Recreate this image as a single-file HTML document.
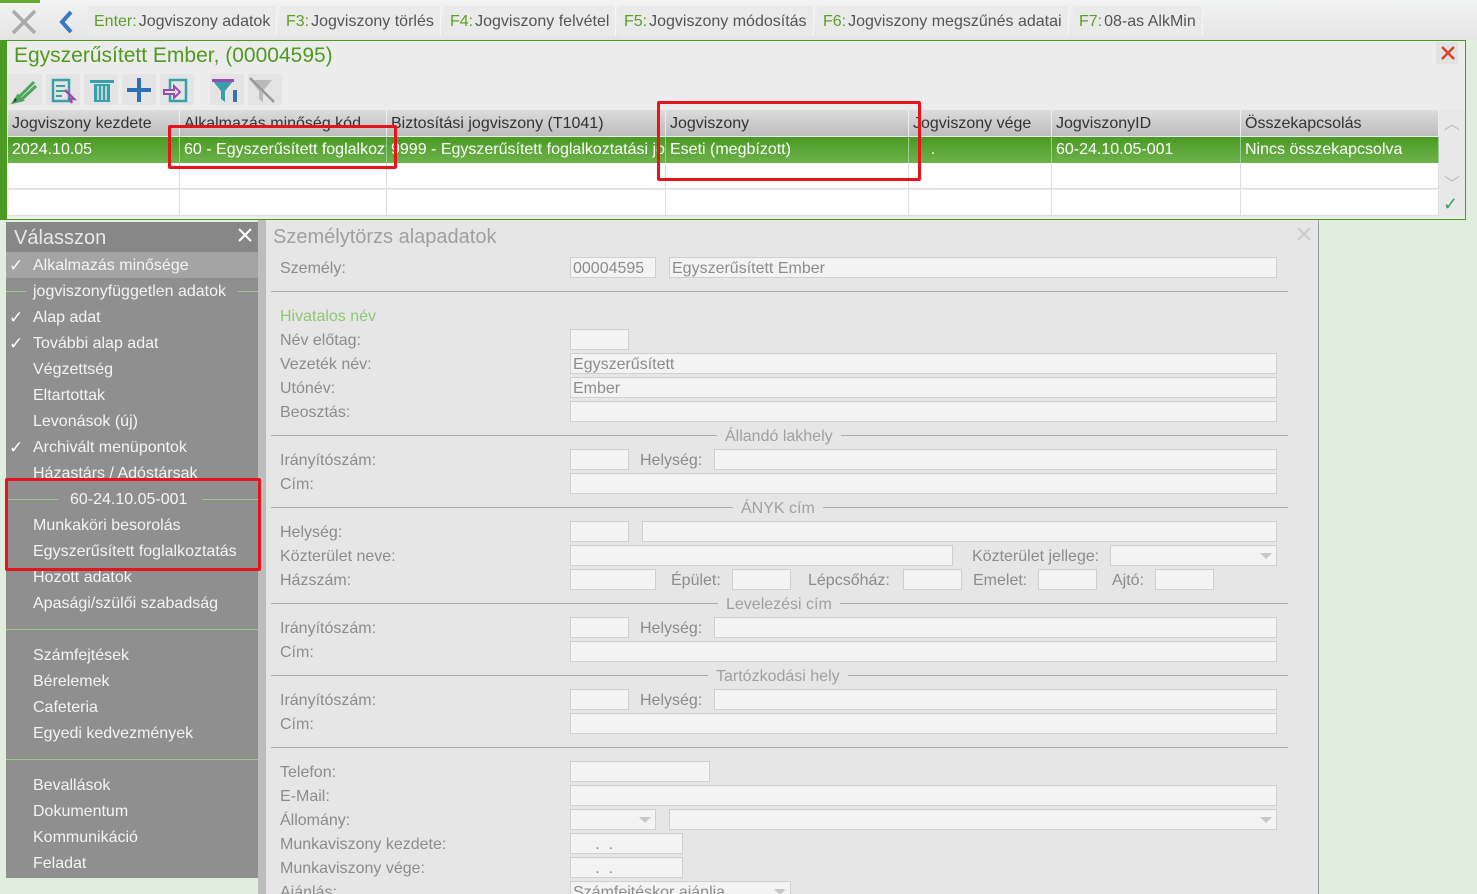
<!DOCTYPE html>
<html><head><meta charset="utf-8"><style>
*{margin:0;padding:0;box-sizing:border-box}
html,body{width:1477px;height:894px;overflow:hidden}
body{background:#e2eedd;font-family:"Liberation Sans",sans-serif;font-size:16px;position:relative;letter-spacing:0}
.a{position:absolute;white-space:nowrap}
#top{left:0;top:0;width:1477px;height:40px;background:linear-gradient(#f2f4f3,#e4e4e4)}
.tb{top:6px;height:30px;line-height:31px;background:#eaeaea;padding:0 6px;color:#555;border-right:1px solid #f6f6f6}
.tb b{font-weight:normal;color:#5c9e26;margin-right:2px}
#main{left:0;top:40px;width:1466px;height:180px;background:#ececec;border:1px solid #4c9a24;border-left:7px solid #4c9a24}
.ic{top:74px;width:34px;height:31px;background:#e4e4e4}
.hd{top:110px;height:26px;line-height:27px;background:linear-gradient(#dcdcdc,#bdbdbd);color:#333;padding-left:4px;border-right:1px solid #eee;overflow:hidden}
.dr{top:137px;height:26px;line-height:26px;background:linear-gradient(#4a9a22,#6db24c);color:#fff;padding-left:4px;border-right:1px solid #9c9;overflow:hidden}
.er{height:26px;background:#fff;border-right:1px solid #ddd;border-bottom:1px solid #ddd}
.red{border:3px solid #e8141b;border-radius:2px}
#menu{left:6px;top:222px;width:252px;height:656px;background:#8f8f8f}
.mi{left:33px;color:#f4f4f4;height:26px;line-height:28px}
.ck{left:9px;color:#fff;font-size:17px;margin-top:1px}
.ml{height:1px;background:#9cc98a}
#pan{left:266px;top:220px;width:1053px;height:674px;background:#e6e6e6;border-right:1px solid #999}
.l{left:280px;color:#8c8c8c;line-height:20px;margin-top:2px}
.lb{color:#8c8c8c;line-height:20px;margin-top:2px}
.in{height:21px;background:#f3f3f3;border:1px solid #cfcfcf;color:#8c8c8c;line-height:21px;padding-left:2px;overflow:hidden}
.hl{left:271px;width:1017px;height:1px;background:#aaa}
.st{color:#a0a0a0;background:#e6e6e6;padding:0 8px;line-height:20px;margin-top:2px}
.dd::after{content:"";position:absolute;right:4px;top:7px;border:6px solid transparent;border-top:6px solid #c8c8c8;border-bottom:0}
</style></head><body>
<div id="top" class="a"></div>
<div class="a" style="left:0;top:0;width:40px;height:3px;background:#6a3"></div>
<svg class="a" style="left:6px;top:6px" width="34" height="32"><path d="M7 5 L29 27 M29 5 L7 27" stroke="#aaa" stroke-width="3.5"/></svg>
<svg class="a" style="left:52px;top:6px" width="30" height="32"><path d="M19 6 L10 16 L19 26" stroke="#3a78c2" stroke-width="4" fill="none"/></svg>
<div class="a tb" style="left:88px"><b>Enter:</b>Jogviszony adatok</div>
<div class="a tb" style="left:280px"><b>F3:</b>Jogviszony törlés</div>
<div class="a tb" style="left:444px"><b>F4:</b>Jogviszony felvétel</div>
<div class="a tb" style="left:618px"><b>F5:</b>Jogviszony módosítás</div>
<div class="a tb" style="left:817px"><b>F6:</b>Jogviszony megszűnés adatai</div>
<div class="a tb" style="left:1073px"><b>F7:</b>08-as AlkMin</div>

<div id="main" class="a"></div>
<div class="a" style="left:14px;top:44px;font-size:21px;color:#4f9a1f;line-height:24px">Egyszerűsített Ember, (00004595)</div>
<div class="a" style="left:1436px;top:42px;width:22px;height:22px;background:#e2e2e2"></div>
<svg class="a" style="left:1440px;top:45px" width="16" height="16"><path d="M2 2L14 14M14 2L2 14" stroke="#d4452b" stroke-width="2.5"/></svg>
<div class="a ic" style="left:8px"></div><div class="a ic" style="left:46px"></div><div class="a ic" style="left:84px"></div><div class="a ic" style="left:122px"></div><div class="a ic" style="left:160px"></div><div class="a ic" style="left:210px"></div><div class="a ic" style="left:248px"></div>
<svg class="a" style="left:8px;top:74px" width="280" height="31">
<path d="M8 26 L26 8 M12 27 L28 12 M6 28 l4 -6 4 4z" stroke="#4ea65a" stroke-width="3" fill="none"/><path d="M5 29 l4-3 -2-2z" fill="#333"/>
<rect x="45" y="6" width="16" height="21" fill="none" stroke="#3aa0a8" stroke-width="2.5"/><path d="M48 12h9M48 17h9M48 22h6" stroke="#3aa0a8" stroke-width="2"/><path d="M57 16 l9 9 -4 0 2 4" stroke="#9c4bb5" stroke-width="2.5" fill="none"/>
<rect x="82" y="6" width="24" height="3" fill="#3aa0a8"/><rect x="86" y="10" width="16" height="18" fill="#3aa0a8"/><path d="M90 12v14M94 12v14M98 12v14" stroke="#e4e4e4" stroke-width="1.5"/>
<path d="M119 16h24M131 4v24" stroke="#2f6fba" stroke-width="4"/>
<rect x="162" y="6" width="16" height="21" fill="none" stroke="#3aa0a8" stroke-width="2.5"/><path d="M156 16h10v-4l6 6 -6 6v-4h-10z" fill="#e4e4e4" stroke="#9c4bb5" stroke-width="2"/>
<path d="M204 6h22l-9 11v11l-4-3v-8z" fill="#3aa0a8"/><rect x="204" y="5" width="22" height="3" fill="#9c4bb5"/><rect x="225" y="16" width="4" height="12" fill="#3a6fba"/>
<path d="M242 6h22l-9 11v11l-4-3v-8z" fill="#bbb"/><path d="M242 4 L266 28" stroke="#999" stroke-width="2.5"/>
</svg>

<div class="a hd" style="left:8px;width:172px">Jogviszony kezdete</div>
<div class="a hd" style="left:180px;width:207px">Alkalmazás minőség kód</div>
<div class="a hd" style="left:387px;width:279px">Biztosítási jogviszony (T1041)</div>
<div class="a hd" style="left:666px;width:243px">Jogviszony</div>
<div class="a hd" style="left:909px;width:143px">Jogviszony vége</div>
<div class="a hd" style="left:1052px;width:189px">JogviszonyID</div>
<div class="a hd" style="left:1241px;width:198px">Összekapcsolás</div>
<div class="a" style="left:1439px;top:110px;width:26px;height:106px;background:#e8e8e8"></div>
<div class="a" style="left:1444px;top:110px;color:#bbb;font-size:16px">︿</div>
<div class="a" style="left:1444px;top:170px;color:#bbb;font-size:16px">﹀</div>
<div class="a" style="left:1443px;top:194px;color:#3aa060;font-size:18px">✓</div>
<div class="a dr" style="left:8px;width:172px">2024.10.05</div>
<div class="a dr" style="left:180px;width:207px">60 - Egyszerűsített foglalkoztatás</div>
<div class="a dr" style="left:387px;width:279px">9999 - Egyszerűsített foglalkoztatási jogviszony</div>
<div class="a dr" style="left:666px;width:243px">Eseti (megbízott)</div>
<div class="a dr" style="left:909px;width:143px">&nbsp;.&nbsp;&nbsp;.</div>
<div class="a dr" style="left:1052px;width:189px">60-24.10.05-001</div>
<div class="a dr" style="left:1241px;width:198px">Nincs összekapcsolva</div>
<div class="a er" style="left:8px;top:163px;width:172px"></div><div class="a er" style="left:180px;top:163px;width:207px"></div><div class="a er" style="left:387px;top:163px;width:279px"></div><div class="a er" style="left:666px;top:163px;width:243px"></div><div class="a er" style="left:909px;top:163px;width:143px"></div><div class="a er" style="left:1052px;top:163px;width:189px"></div><div class="a er" style="left:1241px;top:163px;width:198px"></div>
<div class="a er" style="left:8px;top:190px;width:172px"></div><div class="a er" style="left:180px;top:190px;width:207px"></div><div class="a er" style="left:387px;top:190px;width:279px"></div><div class="a er" style="left:666px;top:190px;width:243px"></div><div class="a er" style="left:909px;top:190px;width:143px"></div><div class="a er" style="left:1052px;top:190px;width:189px"></div><div class="a er" style="left:1241px;top:190px;width:198px"></div>

<div class="a" style="left:258px;top:220px;width:8px;height:674px;background:#bdbdbd"></div>
<div id="menu" class="a"></div>
<div class="a" style="left:6px;top:222px;width:252px;height:30px;background:#878787"></div>
<div class="a" style="left:14px;top:225px;font-size:20px;color:#e8e8e8;line-height:26px">Válasszon</div>
<svg class="a" style="left:236px;top:226px" width="18" height="18"><path d="M3 3L15 15M15 3L3 15" stroke="#fff" stroke-width="2"/></svg>
<div class="a" style="left:6px;top:252px;width:252px;height:26px;background:#a4a4a4"></div>
<div class="a ck" style="top:255px">✓</div><div class="a mi" style="top:252px">Alkalmazás minősége</div>
<div class="a ml" style="left:6px;top:291px;width:20px"></div><div class="a mi" style="top:278px">jogviszonyfüggetlen adatok</div><div class="a ml" style="left:238px;top:291px;width:20px"></div>
<div class="a ck" style="top:307px">✓</div><div class="a mi" style="top:304px">Alap adat</div>
<div class="a ck" style="top:333px">✓</div><div class="a mi" style="top:330px">További alap adat</div>
<div class="a mi" style="top:356px">Végzettség</div>
<div class="a mi" style="top:382px">Eltartottak</div>
<div class="a mi" style="top:408px">Levonások (új)</div>
<div class="a ck" style="top:437px">✓</div><div class="a mi" style="top:434px">Archivált menüpontok</div>
<div class="a mi" style="top:460px;height:20px;overflow:hidden">Házastárs / Adóstársak</div>
<div class="a ml" style="left:8px;top:499px;width:50px"></div><div class="a mi" style="top:486px;left:70px">60-24.10.05-001</div><div class="a ml" style="left:202px;top:499px;width:56px"></div>
<div class="a mi" style="top:512px">Munkaköri besorolás</div>
<div class="a mi" style="top:538px">Egyszerűsített foglalkoztatás</div>
<div class="a mi" style="top:564px">Hozott adatok</div>
<div class="a mi" style="top:590px">Apasági/szülői szabadság</div>
<div class="a ml" style="left:6px;top:629px;width:252px"></div>
<div class="a mi" style="top:642px">Számfejtések</div>
<div class="a mi" style="top:668px">Bérelemek</div>
<div class="a mi" style="top:694px">Cafeteria</div>
<div class="a mi" style="top:720px">Egyedi kedvezmények</div>
<div class="a ml" style="left:6px;top:759px;width:252px"></div>
<div class="a mi" style="top:772px">Bevallások</div>
<div class="a mi" style="top:798px">Dokumentum</div>
<div class="a mi" style="top:824px">Kommunikáció</div>
<div class="a mi" style="top:850px">Feladat</div>

<div id="pan" class="a"></div>
<div class="a" style="left:273px;top:225px;font-size:20px;color:#a0a0a0;line-height:24px">Személytörzs alapadatok</div>
<svg class="a" style="left:1296px;top:226px" width="16" height="16"><path d="M2 2L14 14M14 2L2 14" stroke="#ccc" stroke-width="2"/></svg>

<div class="a l" style="top:257px">Személy:</div><div class="a in" style="left:570px;top:257px;width:86px">00004595</div><div class="a in" style="left:669px;top:257px;width:608px">Egyszerűsített Ember</div>
<div class="a hl" style="top:291px"></div>
<div class="a l" style="top:305px;color:#8cc873">Hivatalos név</div>
<div class="a l" style="top:329px">Név előtag:</div><div class="a in" style="left:570px;top:329px;width:59px"></div>
<div class="a l" style="top:353px">Vezeték név:</div><div class="a in" style="left:570px;top:353px;width:707px">Egyszerűsített</div>
<div class="a l" style="top:377px">Utónév:</div><div class="a in" style="left:570px;top:377px;width:707px">Ember</div>
<div class="a l" style="top:401px">Beosztás:</div><div class="a in" style="left:570px;top:401px;width:707px"></div>
<div class="a hl" style="top:435px"></div><div class="a st" style="left:717px;top:425px">Állandó lakhely</div>
<div class="a l" style="top:449px">Irányítószám:</div><div class="a in" style="left:570px;top:449px;width:59px"></div><div class="a lb" style="left:640px;top:449px">Helység:</div><div class="a in" style="left:714px;top:449px;width:563px"></div>
<div class="a l" style="top:473px">Cím:</div><div class="a in" style="left:570px;top:473px;width:707px"></div>
<div class="a hl" style="top:507px"></div><div class="a st" style="left:733px;top:497px">ÁNYK cím</div>
<div class="a l" style="top:521px">Helység:</div><div class="a in" style="left:570px;top:521px;width:59px"></div><div class="a in" style="left:642px;top:521px;width:635px"></div>
<div class="a l" style="top:545px">Közterület neve:</div><div class="a in" style="left:570px;top:545px;width:383px"></div><div class="a lb" style="left:972px;top:545px">Közterület jellege:</div><div class="a in dd" style="left:1110px;top:545px;width:167px"></div>
<div class="a l" style="top:569px">Házszám:</div><div class="a in" style="left:570px;top:569px;width:86px"></div><div class="a lb" style="left:671px;top:569px">Épület:</div><div class="a in" style="left:732px;top:569px;width:59px"></div><div class="a lb" style="left:808px;top:569px">Lépcsőház:</div><div class="a in" style="left:903px;top:569px;width:59px"></div><div class="a lb" style="left:973px;top:569px">Emelet:</div><div class="a in" style="left:1038px;top:569px;width:59px"></div><div class="a lb" style="left:1112px;top:569px">Ajtó:</div><div class="a in" style="left:1155px;top:569px;width:59px"></div>
<div class="a hl" style="top:603px"></div><div class="a st" style="left:718px;top:593px">Levelezési cím</div>
<div class="a l" style="top:617px">Irányítószám:</div><div class="a in" style="left:570px;top:617px;width:59px"></div><div class="a lb" style="left:640px;top:617px">Helység:</div><div class="a in" style="left:714px;top:617px;width:563px"></div>
<div class="a l" style="top:641px">Cím:</div><div class="a in" style="left:570px;top:641px;width:707px"></div>
<div class="a hl" style="top:675px"></div><div class="a st" style="left:708px;top:665px">Tartózkodási hely</div>
<div class="a l" style="top:689px">Irányítószám:</div><div class="a in" style="left:570px;top:689px;width:59px"></div><div class="a lb" style="left:640px;top:689px">Helység:</div><div class="a in" style="left:714px;top:689px;width:563px"></div>
<div class="a l" style="top:713px">Cím:</div><div class="a in" style="left:570px;top:713px;width:707px"></div>
<div class="a hl" style="top:747px"></div>
<div class="a l" style="top:761px">Telefon:</div><div class="a in" style="left:570px;top:761px;width:140px"></div>
<div class="a l" style="top:785px">E-Mail:</div><div class="a in" style="left:570px;top:785px;width:707px"></div>
<div class="a l" style="top:809px">Állomány:</div><div class="a in dd" style="left:570px;top:809px;width:86px"></div><div class="a in dd" style="left:669px;top:809px;width:608px"></div>
<div class="a l" style="top:833px">Munkaviszony kezdete:</div><div class="a in" style="left:570px;top:833px;width:113px">&nbsp;&nbsp;&nbsp;&nbsp;&nbsp;.&nbsp;&nbsp;.</div>
<div class="a l" style="top:857px">Munkaviszony vége:</div><div class="a in" style="left:570px;top:857px;width:113px">&nbsp;&nbsp;&nbsp;&nbsp;&nbsp;.&nbsp;&nbsp;.</div>
<div class="a l" style="top:881px">Ajánlás:</div><div class="a in dd" style="left:570px;top:881px;width:221px">Számfejtéskor ajánlja</div>

<div class="a red" style="left:168px;top:125px;width:229px;height:44px"></div>
<div class="a red" style="left:657px;top:101px;width:264px;height:80px"></div>
<div class="a red" style="left:5px;top:478px;width:256px;height:93px"></div>
</body></html>
